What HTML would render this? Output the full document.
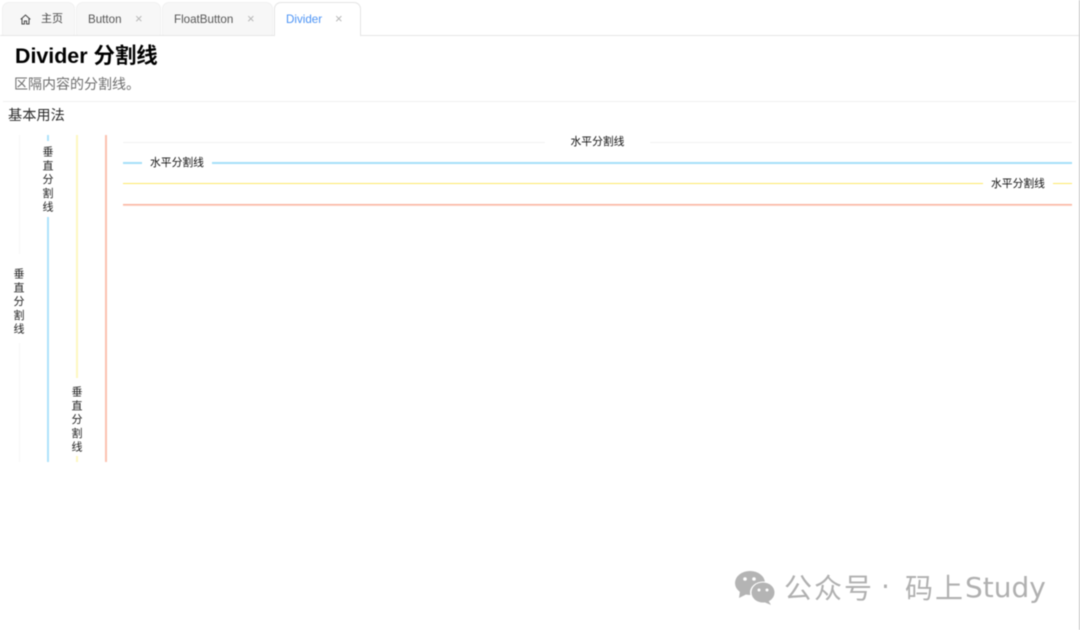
<!DOCTYPE html>
<html lang="zh">
<head>
<meta charset="utf-8">
<style>
html,body{margin:0;padding:0;background:#fff}
#p{position:relative;width:1080px;height:630px;overflow:hidden;background:#fff;font-family:"Liberation Sans","Noto Sans CJK SC",sans-serif;filter:blur(.45px)}
#p div,#p span.a,#p svg{position:absolute}
.tab{top:2px;height:33px;background:#f7f7f7;border-radius:7px 7px 0 0;box-sizing:border-box;border:1px solid #f1f1f1;border-bottom:0}
.t{font-size:11.6px;line-height:14px;color:#555;white-space:nowrap}
.x{font-size:13px;line-height:14px;color:#b5b5b5;top:12px}
.h{height:1px}
.v{width:2px;top:135px;height:327px}
.lab{font-size:10.8px;line-height:14px;color:#111;white-space:nowrap;background:#fff}
.vl{font-size:11px;color:#222;writing-mode:vertical-rl;text-orientation:upright;letter-spacing:2.7px;line-height:14px;width:14px;background:#fff;white-space:nowrap;text-align:center;box-sizing:border-box}
</style>
</head>
<body>
<div id="p">
  <div style="left:0;top:35px;width:1080px;height:1px;background:#e6e6e6"></div>
  <div class="tab" style="left:2px;width:73px"></div>
  <div class="tab" style="left:76px;width:85px"></div>
  <div class="tab" style="left:162px;width:111px"></div>
  <div class="tab" style="left:274px;width:87px;height:34px;background:#fff;border:1px solid #e4e4e4;border-bottom:0"></div>
  <svg style="left:20px;top:14px" width="11" height="11" viewBox="0 0 11 11" fill="none" stroke="#444" stroke-width="1"><path d="M.7 5.4 5.500 1l4.800 4.400M2 4.400V10h2.400V7h2.200v3H9V4.400"/></svg>
  <div class="t" style="left:41px;top:12px;color:#444;font-size:11px">主页</div>
  <div class="t" style="left:88px;top:13px">Button</div>
  <div class="x" style="left:135px">×</div>
  <div class="t" style="left:174px;top:13px">FloatButton</div>
  <div class="x" style="left:247px">×</div>
  <div class="t" style="left:286px;top:13px;color:#4b93f5">Divider</div>
  <div class="x" style="left:335px">×</div>

  <div style="left:15px;top:43px;font-size:21.4px;line-height:26px;font-weight:700;color:#000;white-space:nowrap">Divider 分割线</div>
  <div style="left:14px;top:75px;font-size:14px;line-height:18px;color:#6e6e6e;white-space:nowrap">区隔内容的分割线。</div>
  <div class="h" style="left:3px;top:101px;width:1073px;background:#f0f0f0"></div>
  <div style="left:8px;top:107px;font-size:14.2px;line-height:18px;color:#2a2a2a;white-space:nowrap">基本用法</div>

  <div class="v" style="left:19px;width:1px;background:#f6f6f6"></div>
  <div class="v" style="left:47px;background:#aee3fb"></div>
  <div class="v" style="left:76px;background:#fdf7c0"></div>
  <div class="v" style="left:105px;background:#fcc2b0"></div>

  <div class="vl" style="left:11px;top:254px;height:89px;padding-top:8px">垂直分割线</div>
  <div class="vl" style="left:40px;top:141px;height:76px;padding-top:3px">垂直分割线</div>
  <div class="vl" style="left:69px;top:378px;height:78px;padding-top:6px">垂直分割线</div>

  <div class="h" style="left:123px;top:142px;width:949px;background:#f2f2f2"></div>
  <div class="h" style="left:123px;top:162px;width:949px;height:2px;background:#a5dff8"></div>
  <div class="h" style="left:123px;top:183px;width:949px;background:#fde868"></div>
  <div class="h" style="left:123px;top:204px;width:949px;background:#fbae98;box-shadow:0 1px 0 #fdd5c8"></div>

  <div class="lab" style="left:545px;top:135px;width:105px;text-align:center">水平分割线</div>
  <div class="lab" style="left:142px;top:156px;width:70px;text-align:center">水平分割线</div>
  <div class="lab" style="left:983px;top:177px;width:70px;text-align:center">水平分割线</div>

  <svg style="left:735px;top:571px" width="40" height="34" viewBox="0 0 40 34">
    <ellipse cx="15" cy="12" rx="15" ry="12" fill="#b4b4b4"/>
    <path d="M5 20 4 27l8-4z" fill="#b4b4b4"/>
    <ellipse cx="28" cy="21.500" rx="13" ry="11" fill="#fff"/>
    <ellipse cx="28" cy="21.500" rx="11.500" ry="10" fill="#b4b4b4"/>
    <path d="M33 29l3 5-7-3z" fill="#b4b4b4"/>
    <circle cx="10" cy="8" r="1.800" fill="#fff"/><circle cx="19" cy="8" r="1.800" fill="#fff"/>
    <circle cx="24" cy="19" r="1.500" fill="#fff"/><circle cx="32" cy="19" r="1.500" fill="#fff"/>
  </svg>
  <div style="left:784px;top:569px;font-family:'Noto Sans CJK SC',sans-serif;font-size:28px;line-height:36px;color:#b0b0b0;white-space:nowrap;letter-spacing:2px">公众号</div>
  <div style="left:881px;top:569px;font-size:28px;line-height:36px;color:#b0b0b0;font-family:'DejaVu Sans',sans-serif">·</div>
  <div style="left:905px;top:569px;font-family:'Noto Sans CJK SC',sans-serif;font-size:28px;line-height:36px;color:#b0b0b0;letter-spacing:2px;white-space:nowrap">码上</div>
  <div style="left:965px;top:570px;font-family:'DejaVu Sans',sans-serif;font-size:28px;line-height:36px;color:#b0b0b0;white-space:nowrap">Study</div>

  <div style="left:1079px;top:0;width:1px;height:630px;background:#c4c4c4"></div>
</div>
</body>
</html>
